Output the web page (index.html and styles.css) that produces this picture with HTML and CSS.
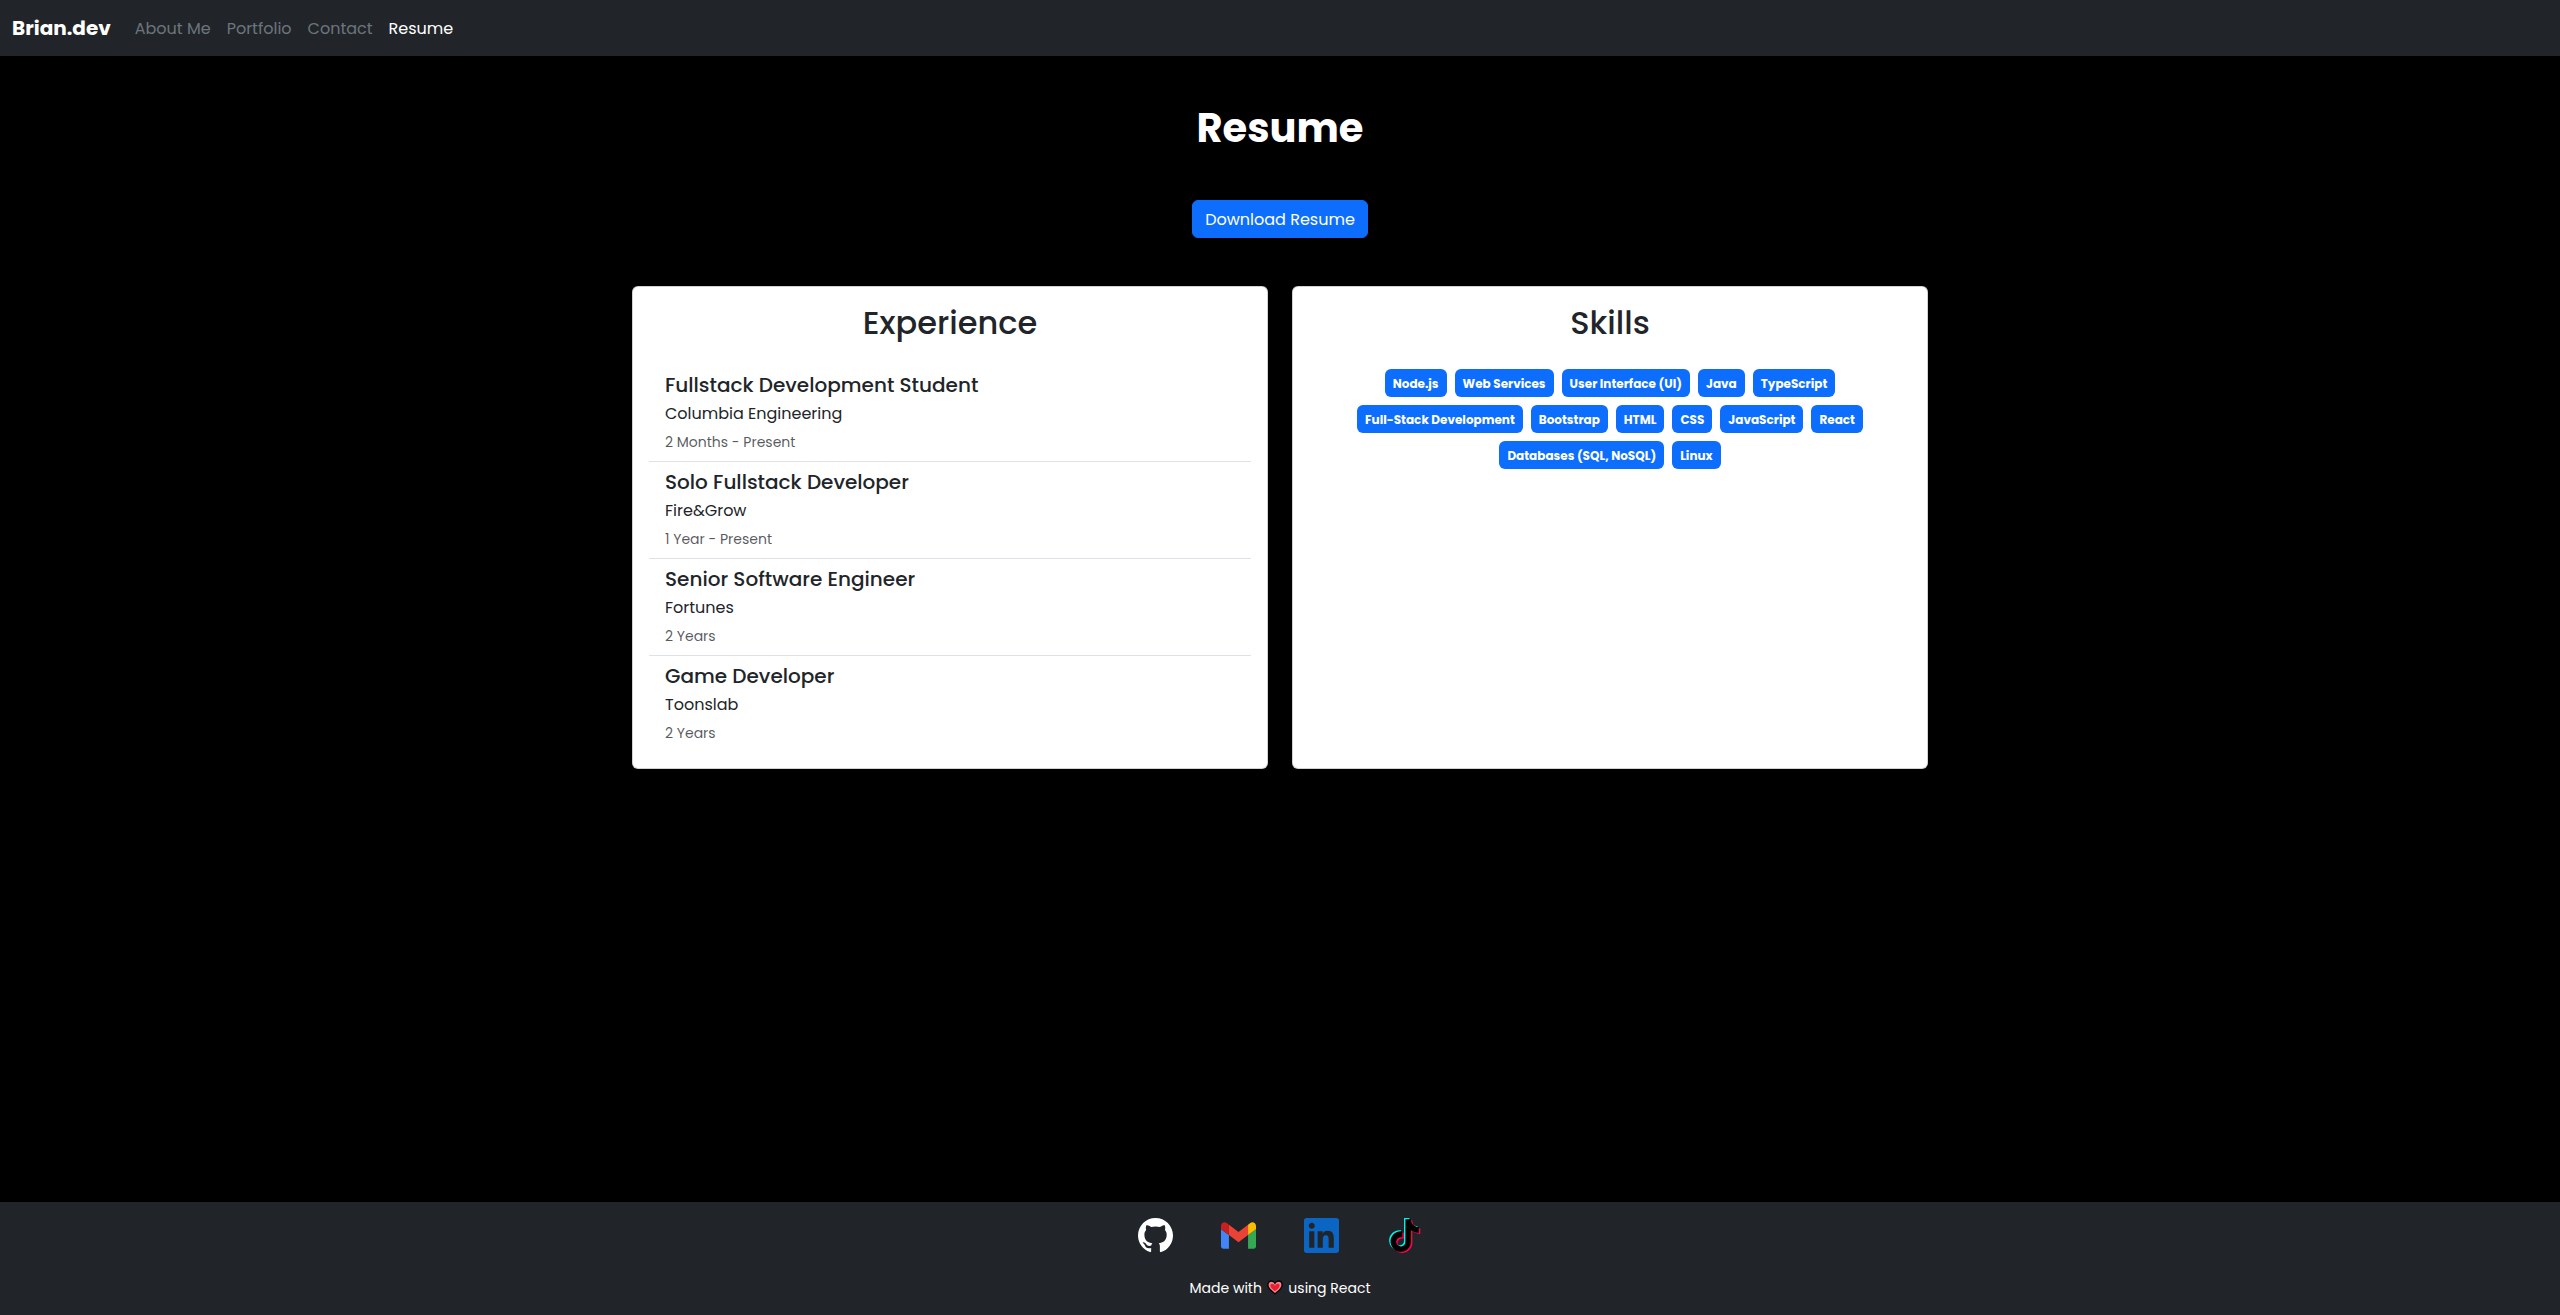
FILE: index.html
```html
<!DOCTYPE html>
<html lang="en">
<head>
  <meta charset="utf-8">
  <title>Brian.dev</title>
  <link rel="stylesheet" href="styles.css">
</head>
<body>
  <nav class="navbar">
    <a class="brand">Brian.dev</a>
    <a class="nav-link">About Me</a>
    <a class="nav-link">Portfolio</a>
    <a class="nav-link">Contact</a>
    <a class="nav-link active">Resume</a>
  </nav>

  <main class="main">
    <h1 class="page-title">Resume</h1>
    <a class="btn">Download Resume</a>

    <div class="row">
      <section class="card">
        <h2 class="card-title">Experience</h2>
        <ul class="jobs">
          <li class="job">
            <h5 class="job-title">Fullstack Development Student</h5>
            <p class="job-company">Columbia Engineering</p>
            <small class="job-time">2 Months - Present</small>
          </li>
          <li class="job">
            <h5 class="job-title">Solo Fullstack Developer</h5>
            <p class="job-company">Fire&amp;Grow</p>
            <small class="job-time">1 Year - Present</small>
          </li>
          <li class="job">
            <h5 class="job-title">Senior Software Engineer</h5>
            <p class="job-company">Fortunes</p>
            <small class="job-time">2 Years</small>
          </li>
          <li class="job">
            <h5 class="job-title">Game Developer</h5>
            <p class="job-company">Toonslab</p>
            <small class="job-time">2 Years</small>
          </li>
        </ul>
      </section>

      <section class="card">
        <h2 class="card-title">Skills</h2>
        <div class="skills">
          <span class="badge">Node.js</span>
          <span class="badge">Web Services</span>
          <span class="badge">User Interface (UI)</span>
          <span class="badge">Java</span>
          <span class="badge">TypeScript</span>
          <span class="badge">Full-Stack Development</span>
          <span class="badge">Bootstrap</span>
          <span class="badge">HTML</span>
          <span class="badge">CSS</span>
          <span class="badge">JavaScript</span>
          <span class="badge">React</span>
          <span class="badge">Databases (SQL, NoSQL)</span>
          <span class="badge">Linux</span>
        </div>
      </section>
    </div>
  </main>

  <footer class="footer">
    <div class="social">
      <svg class="social-icon" viewBox="0 0 16 16" fill="#fff"><path d="M8 0C3.58 0 0 3.58 0 8c0 3.54 2.29 6.53 5.47 7.59.4.07.55-.17.55-.38 0-.19-.01-.82-.01-1.49-2.01.37-2.53-.49-2.69-.94-.09-.23-.48-.94-.82-1.13-.28-.15-.68-.52-.01-.53.63-.01 1.08.58 1.23.82.72 1.21 1.87.87 2.33.66.07-.52.28-.87.51-1.07-1.78-.2-3.64-.89-3.64-3.95 0-.87.31-1.59.82-2.15-.08-.2-.36-1.02.08-2.12 0 0 .67-.21 2.2.82.64-.18 1.32-.27 2-.27s1.36.09 2 .27c1.53-1.04 2.2-.82 2.2-.82.44 1.1.16 1.92.08 2.12.51.56.82 1.27.82 2.15 0 3.07-1.87 3.75-3.65 3.95.29.25.54.73.54 1.48 0 1.07-.01 1.93-.01 2.2 0 .21.15.46.55.38A8.01 8.01 0 0 0 16 8c0-4.42-3.58-8-8-8"/></svg>
      <svg class="social-icon" viewBox="52 31 88 88">
        <path fill="#4285f4" d="M58 108h14V74L52 59v43c0 3.32 2.69 6 6 6"/>
        <path fill="#34a853" d="M120 108h14c3.32 0 6-2.69 6-6V59l-20 15"/>
        <path fill="#fbbc04" d="M120 48v26l20-15v-8c0-7.42-8.47-11.65-14.4-7.2"/>
        <path fill="#ea4335" d="M72 74V48l24 18 24-18v26L96 92"/>
        <path fill="#c5221f" d="M52 51v8l20 15V48l-5.6-4.2c-5.94-4.45-14.4-.22-14.4 7.2"/>
      </svg>
      <svg class="social-icon" viewBox="0 0 24 24" fill="#0a66c2"><path d="M20.447 20.452h-3.554v-5.569c0-1.328-.027-3.037-1.852-3.037-1.853 0-2.136 1.445-2.136 2.939v5.667H9.351V9h3.414v1.561h.046c.477-.9 1.637-1.85 3.37-1.85 3.601 0 4.267 2.37 4.267 5.455v6.286zM5.337 7.433c-1.144 0-2.063-.926-2.063-2.065 0-1.138.92-2.063 2.063-2.063 1.14 0 2.064.925 2.064 2.063 0 1.139-.925 2.065-2.064 2.065zm1.782 13.019H3.555V9h3.564v11.452zM22.225 0H1.771C.792 0 0 .774 0 1.729v20.542C0 23.227.792 24 1.771 24h20.451C23.2 24 24 23.227 24 22.271V1.729C24 .774 23.2 0 22.222 0h.003z"/></svg>
      <svg class="social-icon" viewBox="0 0 35 35">
        <defs><path id="note" d="M12.525.02c1.31-.02 2.61-.01 3.91-.02.08 1.53.63 3.09 1.75 4.17 1.12 1.11 2.7 1.62 4.24 1.79v4.03c-1.44-.05-2.89-.35-4.2-.97-.57-.26-1.1-.59-1.62-.93-.01 2.92.01 5.84-.02 8.75-.08 1.4-.54 2.79-1.35 3.94-1.31 1.92-3.58 3.17-5.91 3.21-1.43.08-2.86-.31-4.08-1.03-2.02-1.19-3.44-3.37-3.65-5.71-.02-.5-.03-1-.01-1.49.18-1.9 1.12-3.72 2.58-4.96 1.66-1.44 3.98-2.13 6.15-1.72.02 1.48-.04 2.96-.04 4.44-.99-.32-2.15-.23-3.02.37-.63.41-1.11 1.04-1.36 1.75-.21.51-.15 1.07-.14 1.61.24 1.64 1.82 3.02 3.5 2.87 1.12-.01 2.19-.66 2.77-1.61.19-.33.4-.67.41-1.06.1-1.79.06-3.57.07-5.36.01-4.03-.01-8.05.02-12.07z"/></defs>
        <use href="#note" fill="#00f2ea" transform="translate(0 0) scale(1.36)"/>
        <use href="#note" fill="#ff004f" transform="translate(2.8 2.3) scale(1.36)"/>
        <use href="#note" fill="#000" transform="translate(1.4 1.15) scale(1.36)"/>
      </svg>
    </div>
    <p class="credit">Made with
      <svg class="heart" viewBox="0 0 16 15"><path d="M8 13.9C5.6 11.6.9 8.900.9 4.900.9 2.600 2.500 1 4.500 1 6 1 7.300 1.800 8 3.200 8.700 1.800 10 1 11.500 1c2 0 3.600 1.600 3.600 3.900 0 4-4.700 6.700-7.100 9z" fill="#f4828c" stroke="#000" stroke-width="1.3"/><path d="M8 11.300C6.300 9.800 3.400 7.800 3.400 5.500c0-1 .7-1.700 1.600-1.700C6.300 3.800 7.300 4.700 8 6c.7-1.300 1.700-2.200 3-2.200.9 0 1.600.7 1.600 1.700 0 2.300-2.900 4.300-4.600 5.800z" fill="#ee1c2e"/></svg>
      using React</p>
  </footer>
</body>
</html>
```

FILE: styles.css
```css
* {
  box-sizing: border-box;
}

body {
  display: flex;
  flex-direction: column;
  min-height: 100vh;
  margin: 0;
  background: #000;
  color: #212529;
  font-family: Poppins, Inter, "Open Sans", sans-serif;
  font-size: 16px;
  line-height: 1.5;
}

h1, h2, h5, p, ul {
  margin: 0;
  padding: 0;
}

.navbar {
  display: flex;
  align-items: center;
  height: 56px;
  padding: 8px 12px;
  background: #212529;
}

.brand {
  margin-right: 16px;
  color: #fff;
  font-size: 20px;
  font-weight: 700;
}

.nav-link {
  padding: 9px 8px 7px;
  color: #6c757d;
}

.nav-link.active {
  color: #fff;
}

.main {
  display: flex;
  flex: 1;
  flex-direction: column;
  align-items: center;
  padding-top: 48px;
}

.page-title {
  margin-bottom: 48px;
  color: #fff;
  font-size: 40px;
  font-weight: 700;
  line-height: 1.2;
}

.btn {
  padding: 7px 12px 5px;
  border: 1px solid #0d6efd;
  border-radius: 6px;
  background: #0d6efd;
  color: #fff;
}

.row {
  display: grid;
  grid-template-columns: 1fr 1fr;
  gap: 24px;
  width: 1296px;
  margin-top: 48px;
}

.card {
  padding: 16px;
  border: 1px solid rgba(0, 0, 0, 0.176);
  border-radius: 6px;
  background: #fff;
}

.card-title {
  margin-bottom: 23px;
  padding-top: 1px;
  font-size: 32px;
  font-weight: 500;
  line-height: 1.2;
  text-align: center;
}

.jobs {
  list-style: none;
}

.job {
  padding: 8px 16px;
  border-bottom: 1px solid #dee2e6;
}

.job:last-child {
  border-bottom: 0;
}

.job-title {
  margin-bottom: 5px;
  font-size: 20px;
  font-weight: 500;
  line-height: 1.2;
}

.job-company {
  margin-bottom: 4px;
}

.job-time {
  display: block;
  height: 23px;
  color: rgba(33, 37, 41, 0.75);
  font-size: 14px;
  line-height: 24px;
}

.skills {
  display: flex;
  flex-wrap: wrap;
  justify-content: center;
  padding: 0 32px;
}

.badge {
  margin: 4px;
  padding: 9px 8px 7px;
  border-radius: 6px;
  background: #0d6efd;
  color: #fff;
  font-size: 12px;
  font-weight: 700;
  line-height: 1;
}

.footer {
  display: flex;
  flex-direction: column;
  align-items: center;
  height: 113px;
  padding-top: 16px;
  background: #212529;
}

.social {
  display: flex;
  gap: 48px;
}

.social-icon {
  display: block;
  width: 35px;
  height: 35px;
}

.credit {
  margin-top: 25px;
  color: #fff;
  font-size: 14px;
  line-height: 21px;
}

.heart {
  width: 16px;
  height: 15px;
  margin: 0 1.5px;
  vertical-align: -2px;
}
```
